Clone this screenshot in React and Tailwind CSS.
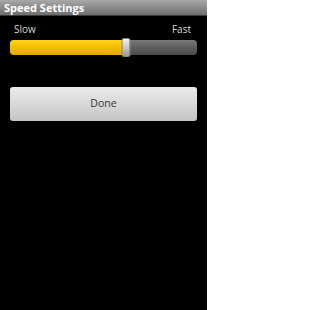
export default function App() {
  const value = 62;

  return (
    <div
      className="h-[310px] w-[207px] bg-black"
      style={{ fontFamily: '"Droid Sans", "Open Sans", "DejaVu Sans", sans-serif' }}
    >
      <div className="flex h-[16px] items-center border-b border-[#3a3a3a] bg-gradient-to-b from-[#a8a8a8] to-[#6e6e6e] px-[4px]">
        <span className="text-[11px] font-bold leading-none text-white">Speed Settings</span>
      </div>

      <div className="px-[10px] pt-[6px]">
        <div className="flex justify-between px-[4px] text-[10px] leading-[14px] text-[#d8d8d8]">
          <span>Slow</span>
          <span className="pr-[2px]">Fast</span>
        </div>

        <div className="relative mt-[1px] h-[20px]">
          <div className="absolute inset-x-0 top-[3px] h-[15px] overflow-hidden rounded-[4px] bg-gradient-to-b from-[#7a7a7a] via-[#5e5e5e] to-[#4a4a4a]">
            <div
              className="h-full bg-gradient-to-b from-[#ffd21a] via-[#f5bb00] to-[#e5a800]"
              style={{ width: `${value}%` }}
            />
          </div>
          <div
            className="absolute top-[1px] h-[19px] w-[9px] -translate-x-1/2 rounded-[2px] border border-[#8a8a8a] bg-gradient-to-b from-[#f0f0f0] via-[#c8c8c8] to-[#9a9a9a]"
            style={{ left: `${value}%` }}
          />
        </div>

        <button className="mt-[30px] flex h-[34px] w-full items-center justify-center rounded-[3px] bg-gradient-to-b from-[#ececec] to-[#c4c4c4] text-[10.5px] text-[#333]">
          Done
        </button>
      </div>
    </div>
  );
}
